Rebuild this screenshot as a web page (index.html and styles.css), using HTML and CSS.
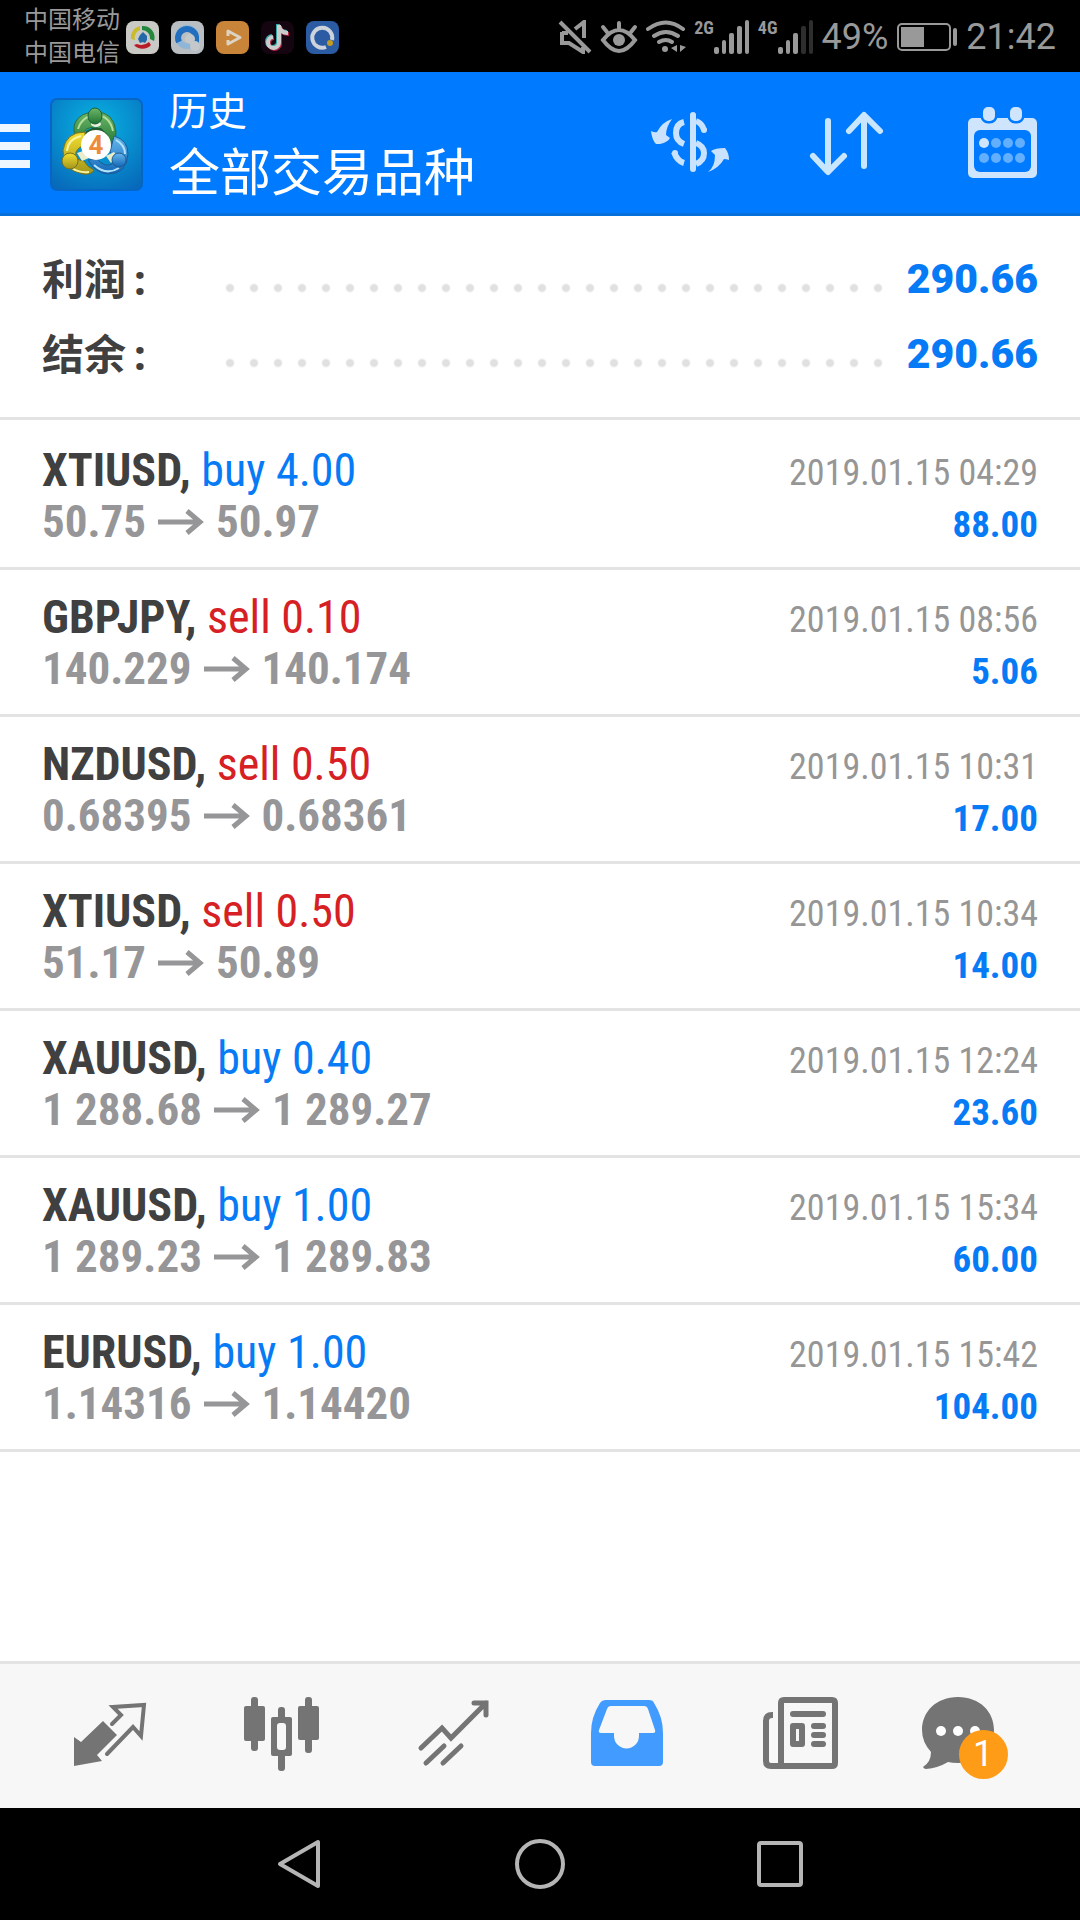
FILE: index.html
```html
<!DOCTYPE html>
<html lang="zh-CN">
<head>
<meta charset="utf-8">
<meta name="viewport" content="width=device-width, initial-scale=1">
<title>历史</title>
<link rel="stylesheet" href="styles.css">
</head>
<body>
<div class="status">
  <div class="carriers"><span>中国移动</span><span>中国电信</span></div>
  <div class="apps">
    <svg class="app" viewBox="0 0 33 33"><rect width="33" height="33" rx="8" fill="#c9cac6"/><path d="M5 18a11.500 11.500 0 0 1 9-13v4a8 8 0 0 0-5 10z" fill="#c9bc28"/><path d="M16 5a11.500 11.500 0 0 1 12 15l-4-2a8 8 0 0 0-8-9z" fill="#23883f"/><path d="M8 24a11.500 11.500 0 0 0 17 0l-2-3a12 12 0 0 1-12 2z" fill="#b71c28"/><path d="M17 11l4 4v4l-2 3-2-1-3 1-2-4 2-4z" fill="#2568a8"/></svg>
    <svg class="app" viewBox="0 0 33 33"><rect width="33" height="33" rx="8" fill="#b9bec2"/><circle cx="16" cy="16" r="9" fill="none" stroke="#8fb6d6" stroke-width="6"/><path d="M8 21A9 9 0 1 1 25 16v6" fill="none" stroke="#216fbe" stroke-width="6"/><circle cx="19" cy="18" r="5" fill="#c4c8cb"/><circle cx="24" cy="25" r="5" fill="#c4c8cb"/></svg>
    <svg class="app" viewBox="0 0 33 33"><rect width="33" height="33" rx="8" fill="#c88439"/><path d="M12 15v-5l12 6.500L12 23v-4" fill="none" stroke="#ddd3c3" stroke-width="3" stroke-linejoin="round"/></svg>
    <svg class="app" viewBox="0 0 33 33"><rect width="33" height="33" rx="8" fill="#150510"/><g fill="none" stroke-width="4"><path d="M17 3v18a5.500 5.500 0 1 1-6-6M17 4c1 5 4 7 9 7" stroke="#33a6a4"/><path d="M19 5v18a5.500 5.500 0 1 1-6-6M19 6c1 5 4 7 9 7" stroke="#b32647"/><path d="M18 4v18a5.500 5.500 0 1 1-6-6M18 5c1 5 4 7 9 7" stroke="#ccc"/></g></svg>
    <svg class="app" viewBox="0 0 33 33"><rect width="33" height="33" rx="8" fill="#2a5ba3"/><path d="M20 26a10 10 0 1 1 6-7" fill="none" stroke="#cdd3da" stroke-width="4"/><circle cx="24" cy="22" r="3" fill="#c39a24"/></svg>
  </div>
  <div class="indicators">
    <svg width="34" height="34" viewBox="0 0 34 34" fill="none" stroke="#999" stroke-width="4"><path d="M2 2l30 30M4 12v11h7l14 9v-5M4 13h6M17 9l9-7v16"/></svg>
    <svg width="38" height="34" viewBox="0 0 38 34" fill="none" stroke="#999" stroke-width="4" stroke-linecap="round"><path d="M3 20q16-20 32 0q-16 22-32 0zM19 8V3M7 12L3 7M31 12l4-5"/><circle cx="19" cy="20" r="6" fill="#999" stroke="none"/></svg>
    <svg width="40" height="34" viewBox="0 0 40 34" fill="none" stroke="#999" stroke-width="4" stroke-linecap="round"><path d="M2 9q18-13 35 0M8 16q12-8 24 0M13 22q7-4 13 0"/><circle cx="19" cy="29" r="3" fill="#999" stroke="none"/><path d="M31 25v7l-6-4zM34 25v7l6-5z" fill="#999" stroke="none"/></svg>
    <div class="network"><span>2G</span><svg width="36" height="34" viewBox="0 0 36 34" fill="#999"><rect y="27" width="5" height="7" rx="2"/><rect x="8" y="20" width="4" height="14" rx="2"/><rect x="15" y="13" width="5" height="21" rx="2"/><rect x="23" y="6" width="5" height="28" rx="2"/><rect x="31" width="4" height="34" rx="2"/></svg></div>
    <div class="network"><span>4G</span><svg width="36" height="34" viewBox="0 0 36 34" fill="#999"><rect y="27" width="5" height="7" rx="2"/><rect x="8" y="20" width="4" height="14" rx="2"/><rect x="15" y="13" width="5" height="21" rx="2"/><rect x="23" y="6" width="5" height="28" rx="2" fill="#2e2e2e"/><rect x="31" width="4" height="34" rx="2" fill="#2e2e2e"/></svg></div>
    <span class="reading">49%</span>
    <svg width="62" height="30" viewBox="0 0 62 30"><rect x="2" y="2" width="52" height="26" rx="4" fill="none" stroke="#999" stroke-width="2"/><rect x="5" y="5" width="23" height="20" fill="#999"/><rect x="57" y="6" width="4" height="18" rx="2" fill="#999"/></svg>
    <span class="reading">21:42</span>
  </div>
</div>

<header class="header">
  <button class="menu" aria-label="菜单"><svg width="30" height="44" fill="#eef7ff"><path d="M0 0h30v8H0zM0 18h30v8H0zM0 36h30v8H0z"/></svg></button>
  <svg class="logo" viewBox="0 0 93 93">
    <defs>
      <radialGradient id="sky" cx=".5" cy=".3" r=".8"><stop offset="0" stop-color="#08b4e4"/><stop offset="1" stop-color="#0769ba"/></radialGradient>
      <linearGradient id="green" x2="0" y2="1"><stop stop-color="#6db868"/><stop offset="1" stop-color="#1f7434"/></linearGradient>
      <linearGradient id="gold" x2="0" y2="1"><stop stop-color="#f3df2d"/><stop offset="1" stop-color="#a2951c"/></linearGradient>
      <linearGradient id="blue" x2="0" y2="1"><stop stop-color="#67b8ee"/><stop offset="1" stop-color="#1266b5"/></linearGradient>
    </defs>
    <rect x="1" y="1" width="91" height="91" rx="6" fill="url(#sky)" stroke="#0765c4" stroke-width="2"/>
    <path d="M27 38q-5-4-2-13 5-11 21-11 18 0 20 20 0 10-7 15l-8-4q6-12-5-16-12 0-13 8z" fill="url(#green)" stroke="#2c6d3c"/>
    <path d="M28 31q4-13 18-14 14 1 17 16" fill="none" stroke="#b5dd9c" stroke-width="2"/>
    <path d="M35 34q-19 0-22 18-1 20 20 24 9 1 11-4-7-3-10-9-10-1-8-9 3-6 9-6z" fill="url(#gold)" stroke="#776f1c"/>
    <path d="M31 38q-13 3-14 15M22 70q7 5 17 4" fill="none" stroke="#f7f2a0" stroke-width="2"/>
    <path d="M64 38q14 4 14 18-1 20-20 20-13-1-20-14l9-1q8 9 15 5 6-6-2-12z" fill="url(#blue)" stroke="#1c5b94"/>
    <path d="M66 42q9 5 9 14M44 67q12 11 25 3" fill="none" stroke="#b4e3fc" stroke-width="2"/>
    <path d="M27 55l9-3 3 8-7 3zM56 58l8-4 3 4-6 7z" fill="#e9edcb"/>
    <ellipse cx="46" cy="26" rx="5" ry="3" fill="#e7f3df"/>
    <path d="M36 33l6-3h9l7 7-2 6-21-2z" fill="#205c30"/>
    <ellipse cx="45" cy="18" rx="7" ry="8" fill="url(#green)" stroke="#225f34"/><circle cx="20" cy="63" r="8" fill="url(#gold)" stroke="#776f1c"/><circle cx="69" cy="62" r="7" fill="url(#blue)" stroke="#1c5b94"/>
    <circle cx="46" cy="47" r="15" fill="#fff"/>
    <text class="logo-digit" x="46" y="56" text-anchor="middle">4</text>
  </svg>
  <h1 class="titles"><span class="section">历史</span><span class="filter">全部交易品种</span></h1>
  <div class="actions">
    <button aria-label="资金"><svg viewBox="0 0 96 96" fill="none" stroke="#c9e3ff" stroke-width="6"><path d="M51 19v54" stroke-linecap="round"/><path d="M42 26q-8 2-8 11 0 8 8 11M32 56q3 9 10 11M54 25q6 2 8 9M54 47q8 3 8 10 0 8-8 11"/><circle cx="33" cy="57" r="3" fill="#c9e3ff" stroke="none"/><circle cx="62" cy="34" r="3" fill="#c9e3ff" stroke="none"/><path d="M30 23q-6 8-6 16l4 3q-2 4-10 6l-4 0q-4-4-5-13 4 2 6 1 5-10 15-13zM66 76q7-5 7-17l-4-4q4-3 14-3 4 5 4 12-3-1-5-1-5 9-16 13z" fill="#c9e3ff" stroke="none"/></svg></button>
    <button aria-label="排序"><svg viewBox="0 0 96 96" fill="none" stroke="#c9e6ff" stroke-width="6" stroke-linecap="round" stroke-linejoin="round"><path d="M30 25v50M15 60l15 16 16-16M66 70V20M51 35l15-16 16 16"/></svg></button>
    <button aria-label="日期"><svg viewBox="0 0 96 96" fill="#cfe5fd"><rect x="14" y="22" width="69" height="60" rx="5"/><rect x="20" y="34" width="57" height="42" rx="6" fill="#007aff"/><g stroke="#007aff" stroke-width="5" paint-order="stroke"><rect x="29" y="11" width="12" height="14" rx="5"/><rect x="56" y="11" width="12" height="14" rx="5"/></g><circle cx="30" cy="47" r="5"/><g fill="#62aeff"><circle cx="42" cy="47" r="5"/><circle cx="54" cy="47" r="5"/><circle cx="66" cy="47" r="5"/><circle cx="30" cy="62" r="5"/><circle cx="42" cy="62" r="5"/><circle cx="54" cy="62" r="5"/><circle cx="66" cy="62" r="5"/></g></svg></button>
  </div>
</header>

<main class="history">
  <dl class="summary">
    <div class="total"><dt>利润<span class="colon">:</span></dt><dd><i class="leader"></i><b>290.66</b></dd></div>
    <div class="total"><dt>结余<span class="colon">:</span></dt><dd><i class="leader"></i><b>290.66</b></dd></div>
  </dl>
  <ul class="deals">
    <li class="deal"><div><div class="line"><b>XTIUSD,</b> <span class="buy">buy 4.00</span></div><div class="prices">50.75<svg class="to" viewBox="0 0 46 26"><path d="M0 13h42M29 2l13 11-13 11"/></svg>50.97</div></div><div class="result"><time>2019.01.15 04:29</time><b>88.00</b></div></li>
    <li class="deal"><div><div class="line"><b>GBPJPY,</b> <span class="sell">sell 0.10</span></div><div class="prices">140.229<svg class="to" viewBox="0 0 46 26"><path d="M0 13h42M29 2l13 11-13 11"/></svg>140.174</div></div><div class="result"><time>2019.01.15 08:56</time><b>5.06</b></div></li>
    <li class="deal"><div><div class="line"><b>NZDUSD,</b> <span class="sell">sell 0.50</span></div><div class="prices">0.68395<svg class="to" viewBox="0 0 46 26"><path d="M0 13h42M29 2l13 11-13 11"/></svg>0.68361</div></div><div class="result"><time>2019.01.15 10:31</time><b>17.00</b></div></li>
    <li class="deal"><div><div class="line"><b>XTIUSD,</b> <span class="sell">sell 0.50</span></div><div class="prices">51.17<svg class="to" viewBox="0 0 46 26"><path d="M0 13h42M29 2l13 11-13 11"/></svg>50.89</div></div><div class="result"><time>2019.01.15 10:34</time><b>14.00</b></div></li>
    <li class="deal"><div><div class="line"><b>XAUUSD,</b> <span class="buy">buy 0.40</span></div><div class="prices">1 288.68<svg class="to" viewBox="0 0 46 26"><path d="M0 13h42M29 2l13 11-13 11"/></svg>1 289.27</div></div><div class="result"><time>2019.01.15 12:24</time><b>23.60</b></div></li>
    <li class="deal"><div><div class="line"><b>XAUUSD,</b> <span class="buy">buy 1.00</span></div><div class="prices">1 289.23<svg class="to" viewBox="0 0 46 26"><path d="M0 13h42M29 2l13 11-13 11"/></svg>1 289.83</div></div><div class="result"><time>2019.01.15 15:34</time><b>60.00</b></div></li>
    <li class="deal"><div><div class="line"><b>EURUSD,</b> <span class="buy">buy 1.00</span></div><div class="prices">1.14316<svg class="to" viewBox="0 0 46 26"><path d="M0 13h42M29 2l13 11-13 11"/></svg>1.14420</div></div><div class="result"><time>2019.01.15 15:42</time><b>104.00</b></div></li>
  </ul>
</main>

<nav class="tabs">
  <a href="#quotes" aria-label="行情"><svg viewBox="0 0 100 100" fill="none" stroke="#747474" stroke-width="4"><path d="M16 51l7 5 22-21 14 14-20 20 5 6-28 5z" fill="#747474" stroke="none"/><path d="M49 68l26-27 8 9 3-31-31 2 8 8-9 9" stroke-linecap="round"/></svg></a>
  <a href="#chart" aria-label="图表"><svg viewBox="0 0 100 100" fill="#747474"><rect x="13" y="20" width="21" height="35" rx="2"/><rect x="20" y="11" width="7" height="54" rx="3"/><rect x="47" y="21" width="7" height="64" rx="3"/><rect x="40" y="31" width="21" height="39" rx="2"/><rect x="46" y="37" width="9" height="27" rx="3" fill="#f7f7f7"/><rect x="67" y="20" width="21" height="34" rx="2"/><rect x="74" y="11" width="7" height="56" rx="3"/></svg></a>
  <a href="#trade" aria-label="交易"><svg viewBox="0 0 100 100" fill="none" stroke="#747474" stroke-width="5" stroke-linecap="round"><path d="M17 62l21-20 9 10 35-35M70 17h12v12M22 77l18-17M39 77l18-17"/></svg></a>
  <a href="#history" aria-label="历史" aria-current="page"><svg viewBox="0 0 100 100"><path d="M30 14h43q4 0 5 3 9 14 9 30v29q0 4-4 4H19q-4 0-4-4V47q0-16 9-30 2-3 6-3zM35 20q-3 0-4 3l-8 21q-1 3 2 3h13v3a12 12 0 0 0 25 0v-3h14q3 0 2-3l-7-21q-1-3-4-3z" fill="#429bff" fill-rule="evenodd"/></svg></a>
  <a href="#news" aria-label="新闻"><svg viewBox="0 0 100 100" fill="#747474"><path d="M24 29h-1q-6 0-6 6v40q0 5 5 5h61q3 0 3-3V17q0-3-3-3H35q-3 0-3 3v63" fill="none" stroke="#747474" stroke-width="6"/><rect x="41" y="25" width="36" height="6" rx="3"/><path d="M44 37h9q3 0 3 3v18q0 3-3 3h-9q-3 0-3-3V40q0-3 3-3zM47 43v12h3V43z" fill-rule="evenodd"/><rect x="62" y="37" width="15" height="6" rx="3"/><rect x="62" y="46" width="15" height="6" rx="3"/><rect x="62" y="55" width="15" height="6" rx="3"/></svg></a>
  <a href="#messages" aria-label="消息 1"><span class="messages"><svg viewBox="0 0 100 100"><path d="M36 11C14 11 0 26 0 44q0 12 9 22 0 10-8 15 1 2 3 2 12-1 22-7 4 1 10 1c22 0 36-15 36-33S58 11 36 11z" fill="#747474"/><g fill="#fff"><circle cx="19" cy="45" r="5"/><circle cx="36" cy="45" r="5"/><circle cx="53" cy="45" r="5"/></g></svg><span class="badge">1</span></span></a>
</nav>

<div class="keys">
  <button aria-label="返回"><svg viewBox="0 0 50 50"><path d="M5 25L43 3v44z"/></svg></button>
  <button aria-label="主屏幕"><svg viewBox="0 0 50 50"><circle cx="25" cy="25" r="23"/></svg></button>
  <button aria-label="最近任务"><svg viewBox="0 0 50 50"><rect x="4" y="4" width="42" height="42" rx="2"/></svg></button>
</div>
</body>
</html>
```
FILE: styles.css
```css
* { box-sizing: border-box; }
body {
  margin: 0;
  min-height: 100vh;
  display: flex;
  flex-direction: column;
  background: #fff;
  color: #404040;
  font-family: Roboto, "Noto Sans CJK SC", sans-serif;
}
svg { display: block; flex: none; }
button { padding: 0; border: 0; background: none; font: inherit; color: inherit; }

.status {
  display: flex;
  align-items: center;
  height: 72px;
  padding: 2px 24px 0;
  background: #000;
  color: #999;
}
.carriers { display: flex; flex-direction: column; font-size: 24px; line-height: 33px; }
.apps { display: flex; gap: 12px; margin-left: 6px; }
.app { width: 33px; height: 33px; }
.indicators { display: flex; align-items: center; gap: 8px; margin-left: auto; }
.network { display: flex; align-items: flex-start; }
.network span { font: 700 18px/16px "Roboto Condensed", "Liberation Sans Narrow", Roboto, sans-serif; }
.reading { font-size: 36px; line-height: 40px; }

.header {
  display: flex;
  align-items: center;
  height: 144px;
  background: #007aff;
  box-shadow: inset 0 -3px #0870dc;
  color: #fff;
}
.menu { padding-top: 4px; }
.logo { width: 93px; height: 93px; margin-left: 20px; }
.logo-digit { font: 700 26px Roboto, sans-serif; fill: #ee8b38; }
.titles { display: flex; flex-direction: column; margin: 0 0 0 26px; font-weight: 400; }
.section { font-size: 39px; line-height: 60px; }
.filter { font-size: 51px; line-height: 64px; }
.actions { display: flex; margin-left: auto; }
.actions button { display: flex; justify-content: center; width: 156px; }
.actions svg { width: 96px; height: 96px; }

.history { flex: 1; }
.summary { margin: 0; padding: 25px 42px 26px; border-bottom: 3px solid #e3e3e3; }
.total {
  display: flex;
  align-items: center;
  height: 75px;
  font: 700 42px/60px "Noto Sans", "Noto Sans CJK SC", sans-serif;
}
.total dt { width: 176px; }
.total dd { display: flex; flex: 1; align-items: center; gap: 16px; margin: 0; }
.total b { color: #077bf5; font-family: Roboto, sans-serif; font-size: 41px; }
.colon { margin-left: 8px; }
.leader {
  flex: 1;
  height: 24px;
  margin-top: 18px;
  background: radial-gradient(circle, #e0e0e0 3px, transparent 5px) 0 0 / 24px 24px;
}

.deals { margin: 0; padding: 3px 0 0; list-style: none; }
.deal {
  display: flex;
  justify-content: space-between;
  padding: 22px 42px 17px;
  border-bottom: 3px solid #e3e3e3;
  font: 46px/51px "Roboto Condensed", "Liberation Sans Narrow", Roboto, sans-serif;
}
.buy { color: #077bf5; }
.sell { color: #d62024; }
.prices { display: flex; align-items: center; gap: 12px; color: #969698; font-size: 45px; font-weight: 700; }
.to { width: 46px; height: 26px; fill: none; stroke: #969698; stroke-width: 5; }
.result { display: flex; flex-direction: column; align-items: flex-end; padding-top: 3px; font-size: 37px; }
.result time { color: #969696; font-size: 36px; }
.result b { color: #077bf5; }

.tabs {
  display: grid;
  grid-template-columns: repeat(6, 1fr);
  justify-items: center;
  padding: 22px;
  border-top: 3px solid #e3e3e3;
  background: #f7f7f7;
}
.tabs svg { width: 100px; height: 100px; }
.messages { position: relative; display: block; }
.badge {
  position: absolute;
  left: 37px;
  top: 44px;
  width: 49px;
  height: 49px;
  border-radius: 50%;
  background: #ff9c17;
  color: #fff;
  font-size: 36px;
  line-height: 49px;
  text-align: center;
}

.keys { display: flex; justify-content: space-around; align-items: center; height: 112px; padding: 0 180px; background: #000; }
.keys svg { width: 50px; height: 50px; fill: none; stroke: #b5b5b5; stroke-width: 4; stroke-linejoin: round; }
```
